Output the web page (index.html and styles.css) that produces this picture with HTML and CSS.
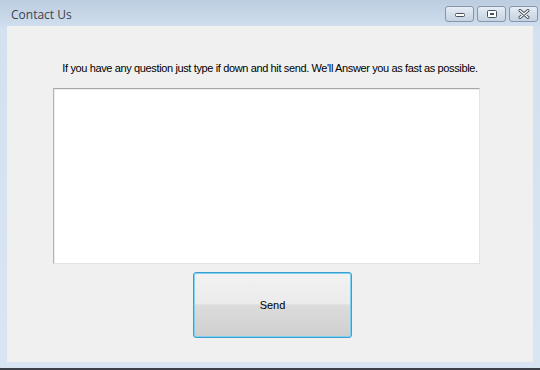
FILE: index.html
```html
<!DOCTYPE html>
<html lang="en">
<head>
    <meta charset="UTF-8">
    <title>Contact Us</title>
    <link rel="stylesheet" href="styles.css">
</head>
<body>
    <div class="window">
        <div class="titlebar">
            <span class="title">Contact Us</span>
            <div class="controls">
                <div class="ctl">
                    <svg width="12" height="8" viewBox="0 0 12 8"><rect x="1.5" y="3.5" width="9" height="3" rx="1" fill="#fff" stroke="#47505c"/></svg>
                </div>
                <div class="ctl">
                    <svg width="12" height="10" viewBox="0 0 12 10"><rect x="1.5" y="1.5" width="9" height="7" rx="1" fill="#fff" stroke="#47505c"/><rect x="4" y="4" width="4" height="2" fill="#47505c"/></svg>
                </div>
                <div class="ctl">
                    <svg width="12" height="10" viewBox="0 0 12 10"><path d="M2 1.5 L10 8.5 M10 1.5 L2 8.5" stroke="#47505c" stroke-width="3" stroke-linecap="round"/><path d="M2 1.5 L10 8.5 M10 1.5 L2 8.5" stroke="#fff" stroke-width="1.2" stroke-linecap="round"/></svg>
                </div>
            </div>
        </div>
        <div class="client">
            <p class="hint">If you have any question just type if down and hit send. We'll Answer you as fast as possible.</p>
            <textarea class="message"></textarea>
            <button class="send">Send</button>
        </div>
    </div>
</body>
</html>
```

FILE: styles.css
```css
* {
    margin: 0;
    padding: 0;
    box-sizing: border-box;
}

body {
    width: 540px;
    height: 370px;
    overflow: hidden;
    background: #3c4047;
}

.window {
    height: 368px;
    background: linear-gradient(180deg, #bccde0 0%, #d3e1f0 30px, #d9e5f2 100%);
    padding: 0 7px 6px 7px;
    display: flex;
    flex-direction: column;
}

.titlebar {
    height: 26px;
    display: flex;
    align-items: center;
    justify-content: space-between;
}

.title {
    font-family: "Open Sans", "DejaVu Sans", sans-serif;
    font-size: 12px;
    color: #3b4350;
    padding-left: 4px;
    padding-top: 2px;
}

.controls {
    display: flex;
    gap: 3px;
    margin-right: -5px;
    margin-top: 2px;
}

.ctl {
    width: 29px;
    height: 16px;
    border: 1px solid #8596ab;
    border-radius: 3px;
    background: linear-gradient(180deg, #e7eef6 0%, #d3deea 50%, #c6d3e2 100%);
    display: flex;
    align-items: center;
    justify-content: center;
}

.client {
    flex: 1;
    background: #f0f0f0;
    display: flex;
    flex-direction: column;
    align-items: flex-start;
}

.hint {
    align-self: center;
    font-family: "Liberation Sans", Arial, sans-serif;
    font-size: 11px;
    color: #000;
    margin-top: 36px;
    letter-spacing: -0.37px;
}

.message {
    width: 427px;
    height: 176px;
    margin-top: 14px;
    margin-left: 46px;
    background: #fff;
    border: 1px solid;
    border-color: #a8a8a8 #e3e3e3 #e3e3e3 #b4b4b4;
    box-shadow: inset 1px 1px 0 #ececec;
    resize: none;
    outline: none;
}

.send {
    width: 159px;
    height: 66px;
    margin-top: 8px;
    margin-left: 186px;
    border: 1px solid #3c9fd0;
    border-radius: 3px;
    box-shadow: inset 0 0 0 1px #7fd0f2;
    background: linear-gradient(180deg, #f2f2f2 0%, #ebebeb 48%, #dcdcdc 50%, #cfcfcf 100%);
    font-family: "Liberation Sans", Arial, sans-serif;
    font-size: 11px;
    color: #000;
}
```
